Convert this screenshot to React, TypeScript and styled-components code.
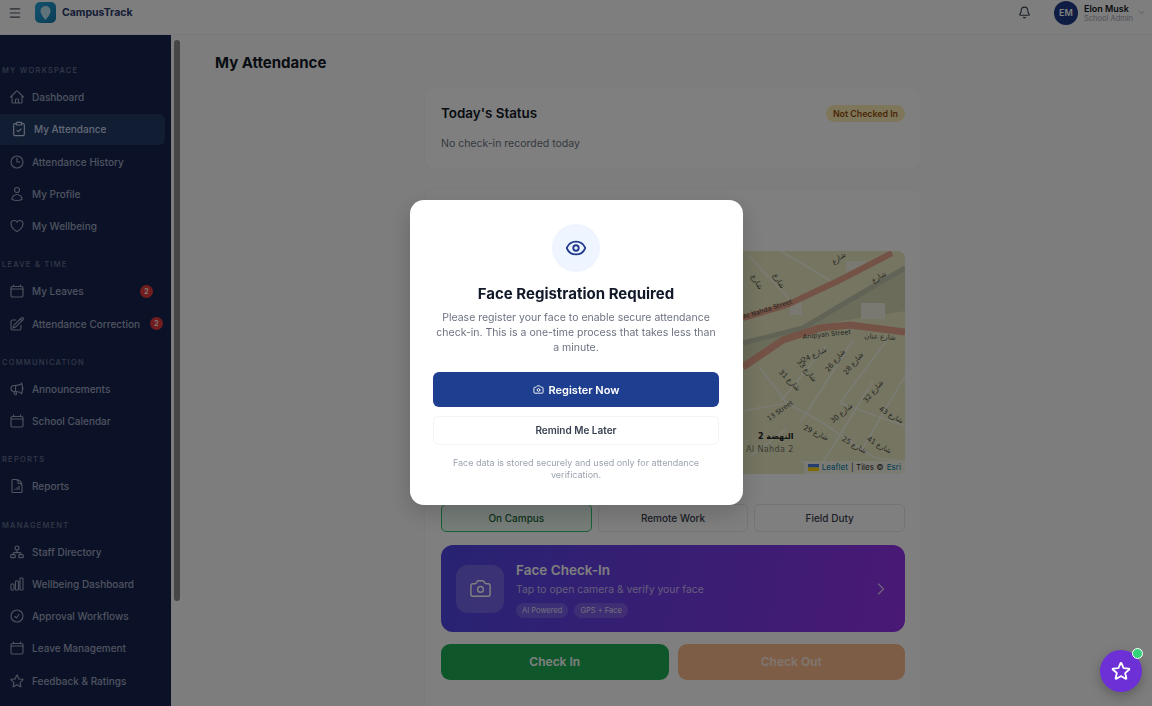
import styled, { createGlobalStyle } from "styled-components";
import { ReactNode } from "react";
import { Bell, Camera, ChevronDown, ChevronRight, ClipboardCheck, Eye, Menu } from "lucide-react";
import {
  HiOutlineCalendar,
  HiOutlineChartBar,
  HiOutlineCheckCircle,
  HiOutlineClock,
  HiOutlineDocumentChartBar,
  HiOutlineHeart,
  HiOutlineHome,
  HiOutlineMegaphone,
  HiOutlinePencilSquare,
  HiOutlineStar,
  HiOutlineUser
} from "react-icons/hi2";

const GlobalStyle = createGlobalStyle`
  html, body { margin: 0; height: 100%; overflow: hidden; }
  body { font-family: Inter, "Liberation Sans", sans-serif; background: #fafafa; color: #111827; }
  * { box-sizing: border-box; }
`;

const Page = styled.div`
  width: 1152px;
  height: 706px;
  display: grid;
  grid-template-rows: 35px 1fr;
  overflow: hidden;
`;

const TopBar = styled.header`
  display: flex;
  align-items: center;
  padding: 0 6px 9px 8px;
  background: #fcfcfc;
  border-bottom: 1px solid #eef0f2;
`;

const LogoTile = styled.div`
  width: 21px;
  height: 21px;
  margin: 0 6px 0 13px;
  border-radius: 5px;
  background: linear-gradient(135deg, #2aa6dc, #1279ab);
  display: flex;
  align-items: center;
  justify-content: center;
  color: #bfe6f4;
`;

const Brand = styled.div`
  font-size: 10.5px;
  font-weight: 700;
  color: #2a3a6e;
  flex: 1;
`;

const Avatar = styled.div`
  width: 24px;
  height: 24px;
  border-radius: 50%;
  margin: 0 6px 0 23px;
  background: #1e3a8a;
  color: #fff;
  font-size: 9px;
  font-weight: 600;
  display: flex;
  align-items: center;
  justify-content: center;
`;

const UserBlock = styled.div`
  width: 53px;
  margin-top: 2px;
  display: flex;
  flex-direction: column;
`;

const UserName = styled.div`
  font-size: 9px;
  line-height: 10px;
  font-weight: 600;
  color: #111827;
`;

const UserRole = styled.div`
  font-size: 7.5px;
  line-height: 9px;
  color: #9ca3af;
`;

const Body = styled.div`
  display: flex;
  min-height: 0;
`;

const Sidebar = styled.nav`
  width: 171px;
  flex: none;
  background: #172450;
  padding-top: 30px;
  overflow: hidden;
`;

const NavSection = styled.div`
  margin-bottom: 18px;
`;

const SectionLabel = styled.div`
  height: 12px;
  line-height: 12px;
  margin-bottom: 5px;
  padding-left: 2px;
  font-size: 7.5px;
  font-weight: 500;
  letter-spacing: 1.25px;
  text-transform: uppercase;
  color: #6a7390;
`;

const NavItem = styled.div<{ $active?: boolean }>`
  height: 30.25px;
  margin: 0 6px 2px 0;
  padding-left: ${p => (p.$active ? 11 : 9)}px;
  display: flex;
  align-items: center;
  gap: 7px;
  font-size: 10px;
  font-weight: 500;
  white-space: nowrap;
  color: ${p => (p.$active ? "#c8d2ea" : "#9ea6be")};
  background: ${p => (p.$active ? "#223a66" : "transparent")};
  border-radius: 0 6px 6px 0;
  svg { flex: none; width: 16px; height: 16px; stroke-width: 1.7; }
`;

const NavBadge = styled.span<{ $inset: number }>`
  width: 13px;
  height: 13px;
  margin-left: auto;
  margin-right: ${p => p.$inset}px;
  border-radius: 50%;
  background: #e23b3b;
  color: #fff;
  font-size: 7px;
  font-weight: 600;
  display: flex;
  align-items: center;
  justify-content: center;
`;

const ScrollRail = styled.div`
  width: 10px;
  flex: none;
  padding: 5px 1px 0 3px;
  background: #fafafa;
`;

const ScrollThumb = styled.div`
  height: 561px;
  border-radius: 3px;
  background: #8a8c8a;
`;

const Main = styled.main`
  flex: 1;
  padding: 18px 0 0 34px;
  overflow: hidden;
`;

const PageTitle = styled.h1`
  margin: 0 0 14px;
  font-size: 15px;
  line-height: 20px;
  font-weight: 700;
  color: #111827;
`;

const Column = styled.div`
  width: 498px;
  margin-left: 209px;
  display: flex;
  flex-direction: column;
  gap: 18px;
`;

const Card = styled.section`
  background: #fff;
  border: 1px solid #f7f7f8;
  border-radius: 12px;
  padding: 16px;
`;

const StatusCard = styled(Card)`
  height: 83px;
`;

const StatusHead = styled.div`
  display: flex;
  justify-content: space-between;
  align-items: center;
  margin-bottom: 15px;
`;

const CardTitle = styled.h2`
  margin: 0;
  font-size: 13.4px;
  line-height: 18px;
  font-weight: 600;
  color: #111827;
`;

const Pill = styled.span`
  padding: 3px 7px;
  border-radius: 10px;
  background: #fdecb4;
  color: #92500e;
  font-size: 8.8px;
  font-weight: 600;
`;

const Muted = styled.div`
  font-size: 10.5px;
  line-height: 14px;
  color: #6b7280;
`;

const AttendanceCard = styled(Card)`
  height: 530px;
  padding-top: 62px;
`;

const MapBox = styled.div`
  position: relative;
  height: 223px;
  border-radius: 8px;
  overflow: hidden;
  background: #eaebc3;
  margin-bottom: 30px;
`;

const MapSvg = styled.svg`
  display: block;
  width: 100%;
  height: 100%;
`;

const Attribution = styled.div`
  position: absolute;
  right: 0;
  bottom: 0;
  padding: 1px 4px;
  background: rgba(255, 255, 255, 0.6);
  font-size: 8.1px;
  line-height: 11px;
  color: #333;
  display: flex;
  align-items: center;
  gap: 3px;
  span { color: #0078a8; }
`;

const ModeRow = styled.div`
  display: grid;
  grid-template-columns: repeat(3, 1fr);
  gap: 6px;
  margin-bottom: 13px;
`;

const ModeButton = styled.button<{ $active?: boolean }>`
  height: 28px;
  padding: 0;
  border-radius: 5px;
  font: 500 10px Inter, sans-serif;
  border: 1px solid ${p => (p.$active ? "#2fc56b" : "#e7e9ec")};
  background: ${p => (p.$active ? "#eefbf3" : "#fff")};
  color: ${p => (p.$active ? "#166534" : "#374151")};
`;

const FaceCard = styled.div`
  height: 87px;
  margin-bottom: 12px;
  padding: 0 14px 0 15px;
  border-radius: 12px;
  background: linear-gradient(100deg, #4f46e5, #9333ea);
  display: flex;
  align-items: center;
  gap: 12px;
  color: #fff;
`;

const FaceIcon = styled.div`
  width: 48px;
  height: 48px;
  border-radius: 12px;
  background: rgba(255, 255, 255, 0.18);
  display: flex;
  align-items: center;
  justify-content: center;
`;

const FaceText = styled.div`
  flex: 1;
  padding-top: 2px;
`;

const FaceTitle = styled.div`
  font-size: 13.5px;
  line-height: 17px;
  font-weight: 600;
`;

const FaceSub = styled.div`
  margin: 4px 0 6px;
  font-size: 10.4px;
  line-height: 14px;
  color: rgba(255, 255, 255, 0.65);
`;

const FaceTags = styled.div`
  display: flex;
  gap: 6px;
`;

const FaceTag = styled.span`
  padding: 2px 6px;
  border-radius: 8px;
  font-size: 7.5px;
  line-height: 11px;
  background: rgba(255, 255, 255, 0.16);
  color: rgba(255, 255, 255, 0.8);
`;

const ActionRow = styled.div`
  display: grid;
  grid-template-columns: 1fr 1fr;
  gap: 9px;
`;

const ActionButton = styled.button<{ $tone: "in" | "out" }>`
  height: 36px;
  padding: 0 0 2px;
  border: none;
  border-radius: 9px;
  font: 600 12px Inter, sans-serif;
  background: ${p => (p.$tone === "in" ? "#1fae57" : "#fdba8c")};
  color: ${p => (p.$tone === "in" ? "#fff" : "rgba(255,255,255,.75)")};
`;

const Overlay = styled.div`
  position: fixed;
  inset: 0;
  padding-bottom: 1px;
  background: rgba(0, 0, 0, 0.5);
  backdrop-filter: blur(0.6px);
  display: flex;
  align-items: center;
  justify-content: center;
`;

const Modal = styled.div`
  width: 333px;
  height: 305px;
  padding: 24px 23.5px;
  border-radius: 14px;
  background: #fff;
  display: flex;
  flex-direction: column;
  align-items: center;
  box-shadow: 0 8px 24px rgba(0, 0, 0, 0.18);
`;

const ModalIcon = styled.div`
  width: 48px;
  height: 48px;
  flex: none;
  border-radius: 50%;
  background: #eff5ff;
  color: #1e3a8a;
  display: flex;
  align-items: center;
  justify-content: center;
`;

const ModalTitle = styled.h3`
  margin: 12px 0 7px;
  font-size: 15px;
  line-height: 19px;
  font-weight: 700;
  color: #111827;
`;

const ModalText = styled.p`
  margin: 0 0 17px;
  width: 285px;
  text-align: center;
  font-size: 10.5px;
  line-height: 15px;
  color: #6b7280;
`;

const PrimaryButton = styled.button`
  width: 100%;
  height: 35px;
  flex: none;
  margin-bottom: 9px;
  border: none;
  border-radius: 6px;
  background: #1e3f8f;
  color: #fff;
  font: 600 11px Inter, sans-serif;
  display: flex;
  align-items: center;
  justify-content: center;
  gap: 5px;
`;

const GhostButton = styled.button`
  width: 100%;
  height: 29px;
  flex: none;
  margin-bottom: 12px;
  padding: 0 0 1px;
  border: 1px solid #f3f4f6;
  border-radius: 6px;
  background: #fff;
  color: #374151;
  font: 600 10px Inter, sans-serif;
`;

const FootNote = styled.div`
  width: 270px;
  text-align: center;
  font-size: 9px;
  line-height: 12px;
  color: #9ca3af;
`;

const Fab = styled.button`
  position: fixed;
  right: 10px;
  bottom: 14px;
  width: 42px;
  height: 42px;
  padding: 0;
  border: none;
  border-radius: 50%;
  background: #6d2fd6;
  color: #fff;
  display: flex;
  align-items: center;
  justify-content: center;
  box-shadow: 0 4px 12px rgba(0, 0, 0, 0.25);
  svg { stroke-width: 2; }
`;

const FabDot = styled.span`
  position: absolute;
  top: -2px;
  right: -1px;
  width: 11px;
  height: 11px;
  border-radius: 50%;
  background: #34d27b;
  border: 1.5px solid #fff;
`;

const StaffIcon = () => (
  <svg viewBox="0 0 24 24" fill="none" stroke="currentColor">
    <circle cx="12" cy="6" r="3" />
    <path d="M12 9v4M6 16v-1.5a1.5 1.5 0 0 1 1.5-1.5h9a1.5 1.5 0 0 1 1.5 1.5V16" />
    <rect x="2.5" y="16" width="7" height="4.5" rx="1.5" />
    <rect x="14.5" y="16" width="7" height="4.5" rx="1.5" />
  </svg>
);

type iNavItem = { label: string; icon: ReactNode; active?: boolean; badgeInset?: number };
type iNavSection = { title: string; items: iNavItem[] };

const sections: iNavSection[] = [
  {
    title: "My Workspace",
    items: [
      { label: "Dashboard", icon: <HiOutlineHome /> },
      { label: "My Attendance", icon: <ClipboardCheck />, active: true },
      { label: "Attendance History", icon: <HiOutlineClock /> },
      { label: "My Profile", icon: <HiOutlineUser /> },
      { label: "My Wellbeing", icon: <HiOutlineHeart /> }
    ]
  },
  {
    title: "Leave & Time",
    items: [
      { label: "My Leaves", icon: <HiOutlineCalendar />, badgeInset: 12 },
      { label: "Attendance Correction", icon: <HiOutlinePencilSquare />, badgeInset: 2 }
    ]
  },
  {
    title: "Communication",
    items: [
      { label: "Announcements", icon: <HiOutlineMegaphone /> },
      { label: "School Calendar", icon: <HiOutlineCalendar /> }
    ]
  },
  {
    title: "Reports",
    items: [{ label: "Reports", icon: <HiOutlineDocumentChartBar /> }]
  },
  {
    title: "Management",
    items: [
      { label: "Staff Directory", icon: <StaffIcon /> },
      { label: "Wellbeing Dashboard", icon: <HiOutlineChartBar /> },
      { label: "Approval Workflows", icon: <HiOutlineCheckCircle /> },
      { label: "Leave Management", icon: <HiOutlineCalendar /> },
      { label: "Feedback & Ratings", icon: <HiOutlineStar /> }
    ]
  }
];

const streetLabels = [
  { x: 374, y: 106, r: -25, t: "شارع 24" },
  { x: 364, y: 121, r: 50, t: "شارع 33" },
  { x: 347, y: 131, r: 45, t: "شارع 31" },
  { x: 396, y: 111, r: -50, t: "شارع 26" },
  { x: 414, y: 114, r: -50, t: "شارع 28" },
  { x: 434, y: 142, r: -50, t: "شارع 32" },
  { x: 402, y: 164, r: -40, t: "شارع 30" },
  { x: 449, y: 166, r: 30, t: "شارع 43" },
  { x: 374, y: 184, r: 25, t: "شارع 29" },
  { x: 412, y: 196, r: 30, t: "شارع 25" },
  { x: 437, y: 196, r: 30, t: "شارع 41" },
  { x: 399, y: 9, r: -35, t: "شارع" },
  { x: 336, y: 31, r: 60, t: "شارع" },
  { x: 439, y: 28, r: -30, t: "شارع" },
  { x: 314, y: 32, r: 60, t: "شارع" },
  { x: 439, y: 88, r: 3, t: "شارع عنان" }
];

const MapDrawing = () => (
  <MapSvg viewBox="0 0 464 223" preserveAspectRatio="none">
    <rect width="464" height="223" fill="#eaebc3" />
    <path d="M302 92 L362 77 L409 49 L464 17 L464 60 L400 70 L340 90 L302 112 Z" fill="#d8d9b4" />
    <path d="M349 50h12v14h-12zM405 10h20v10h-20zM420 52h24v16h-24z" fill="#f3f3e4" />
    <g fill="none" stroke="#f6f6e8" strokeWidth="1.6">
      <path d="M308 5 L350 50 M340 0 L390 30 M319 117 L346 152 L382 172 L432 206 L464 211" />
      <path d="M412 89 L359 172 M446 89 L399 152 M385 95 L340 150 M464 125 L420 200" />
      <path d="M302 160 L346 152 M399 152 L464 175 M432 130 L375 223 M310 205 L345 178 M360 210 L400 223" />
    </g>
    <path d="M302 92 L362 77 L409 49 L464 17" fill="none" stroke="#c4c6ae" strokeWidth="5" />
    <path d="M302 67 L346 54 L399 29 L451 2" fill="none" stroke="#e8a58a" strokeWidth="6" />
    <path d="M302 116 L342 89 L379 77 L409 74 L464 81" fill="none" stroke="#e8a58a" strokeWidth="7" />
    <g fontFamily="'DejaVu Sans', sans-serif" fontSize="7" fill="#4a4a42">
      {streetLabels.map(label => (
        <text key={label.x + label.t} x={label.x} y={label.y} textAnchor="middle" transform={`rotate(${label.r} ${label.x} ${label.y})`}>
          {label.t}
        </text>
      ))}
      <text x="362" y="88" fontSize="6.5" transform="rotate(-6 362 88)">Anqiyah Street</text>
      <text x="303" y="68" fontSize="6.5" transform="rotate(-18 303 68)">Al Nahda Street</text>
      <text x="328" y="170" fontSize="6.5" transform="rotate(-35 328 170)">13 Street</text>
    </g>
    <text x="317" y="188" fontFamily="'DejaVu Sans', sans-serif" fontSize="8" fontWeight="700" fill="#222">2 النهضة</text>
    <text x="305" y="201" fontFamily="'DejaVu Sans', sans-serif" fontSize="8" fill="#77786a" letterSpacing="0.4">Al Nahda 2</text>
  </MapSvg>
);

const UkraineFlag = () => (
  <svg width="11" height="7" viewBox="0 0 11 7">
    <rect width="11" height="3.5" fill="#4c7be1" />
    <rect y="3.5" width="11" height="3.5" fill="#ffd500" />
  </svg>
);

const LogoPin = () => (
  <svg width="11" height="14" viewBox="0 0 11 14" fill="currentColor">
    <path d="M5.5 0a5 5 0 0 0-5 5c0 3.2 3.4 7.2 5 9 1.6-1.8 5-5.8 5-9a5 5 0 0 0-5-5Z" />
  </svg>
);

const App = () => {
  return (
    <>
      <GlobalStyle />
      <Page>
        <TopBar>
          <Menu size={14} color="#4b5563" />
          <LogoTile><LogoPin /></LogoTile>
          <Brand>CampusTrack</Brand>
          <Bell size={13} color="#374151" />
          <Avatar>EM</Avatar>
          <UserBlock>
            <UserName>Elon Musk</UserName>
            <UserRole>School Admin</UserRole>
          </UserBlock>
          <ChevronDown size={9} color="#9ca3af" />
        </TopBar>
        <Body>
          <Sidebar>
            {sections.map(section => (
              <NavSection key={section.title}>
                <SectionLabel>{section.title}</SectionLabel>
                {section.items.map(item => (
                  <NavItem key={item.label} $active={item.active}>
                    {item.icon}
                    {item.label}
                    {item.badgeInset !== undefined ? <NavBadge $inset={item.badgeInset}>2</NavBadge> : null}
                  </NavItem>
                ))}
              </NavSection>
            ))}
          </Sidebar>
          <ScrollRail><ScrollThumb /></ScrollRail>
          <Main>
            <PageTitle>My Attendance</PageTitle>
            <Column>
              <StatusCard>
                <StatusHead>
                  <CardTitle>Today's Status</CardTitle>
                  <Pill>Not Checked In</Pill>
                </StatusHead>
                <Muted>No check-in recorded today</Muted>
              </StatusCard>
              <AttendanceCard>
                <MapBox>
                  <MapDrawing />
                  <Attribution>
                    <UkraineFlag />
                    <span>Leaflet</span> | Tiles © <span>Esri</span>
                  </Attribution>
                </MapBox>
                <ModeRow>
                  <ModeButton $active>On Campus</ModeButton>
                  <ModeButton>Remote Work</ModeButton>
                  <ModeButton>Field Duty</ModeButton>
                </ModeRow>
                <FaceCard>
                  <FaceIcon><Camera size={23} strokeWidth={1.5} /></FaceIcon>
                  <FaceText>
                    <FaceTitle>Face Check-In</FaceTitle>
                    <FaceSub>Tap to open camera &amp; verify your face</FaceSub>
                    <FaceTags>
                      <FaceTag>AI Powered</FaceTag>
                      <FaceTag>GPS + Face</FaceTag>
                    </FaceTags>
                  </FaceText>
                  <ChevronRight size={20} strokeWidth={1.5} color="rgba(255,255,255,.7)" />
                </FaceCard>
                <ActionRow>
                  <ActionButton $tone="in">Check In</ActionButton>
                  <ActionButton $tone="out">Check Out</ActionButton>
                </ActionRow>
              </AttendanceCard>
            </Column>
          </Main>
        </Body>
      </Page>
      <Overlay>
        <Modal>
          <ModalIcon><Eye size={22} strokeWidth={2} /></ModalIcon>
          <ModalTitle>Face Registration Required</ModalTitle>
          <ModalText>
            Please register your face to enable secure attendance check-in. This is a one-time process that takes less than a minute.
          </ModalText>
          <PrimaryButton><Camera size={11} />Register Now</PrimaryButton>
          <GhostButton>Remind Me Later</GhostButton>
          <FootNote>Face data is stored securely and used only for attendance verification.</FootNote>
        </Modal>
      </Overlay>
      <Fab>
        <HiOutlineStar size={22} />
        <FabDot />
      </Fab>
    </>
  );
};

export default App;
